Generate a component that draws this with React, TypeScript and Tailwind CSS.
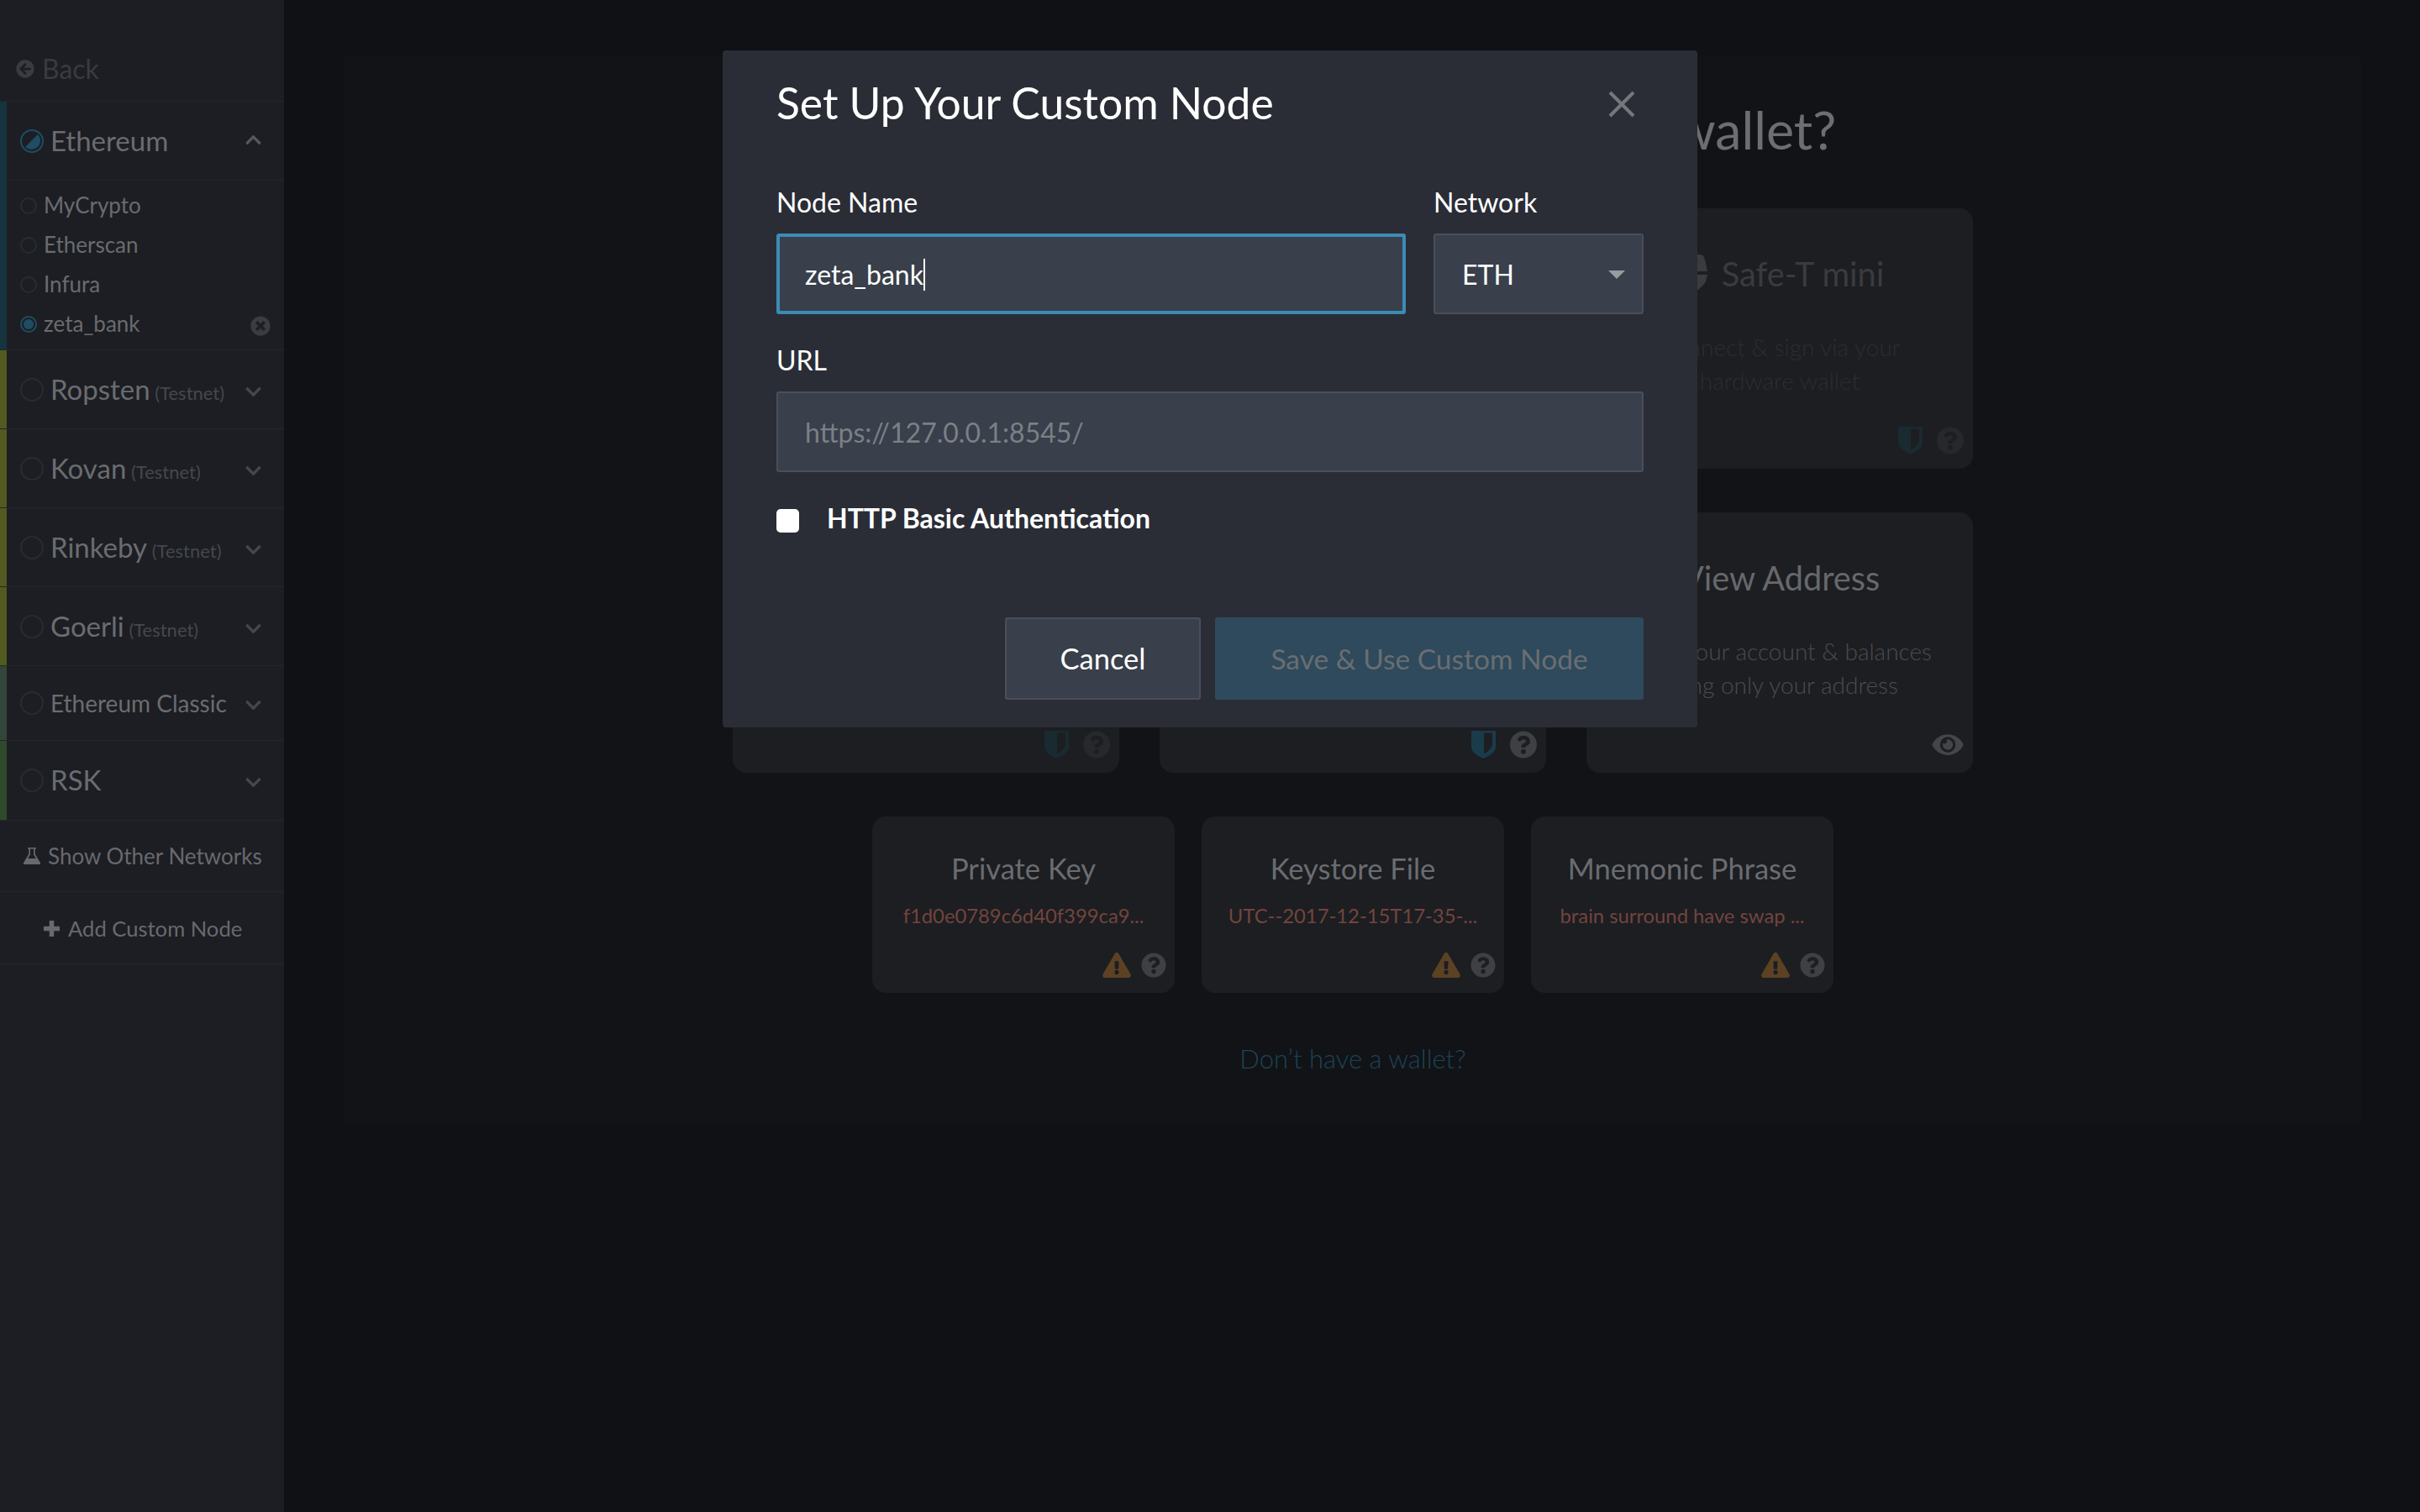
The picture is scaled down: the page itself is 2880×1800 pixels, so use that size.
import React from "react";
import { FaArrowCircleLeft, FaChevronUp, FaChevronDown, FaTimesCircle, FaQuestionCircle, FaExclamationTriangle, FaEye } from "react-icons/fa";

const Shield = ({ color }: { color: string }) => (
  <svg viewBox="0 0 29 33" className={`w-[29px] h-[33px] ${color}`}>
    <path fill="currentColor" d="M0 0h29v19c0 7-8 11-14.5 14C8 30 0 26 0 19z" />
    <path fill="#1c1e22" d="M15 2.5h10v14c0 3-5 8-10 11z" />
  </svg>
);

const Radio = ({ big }: { big?: boolean }) => (
  <span className={big ? "w-[28px] h-[28px] rounded-full border-2 border-[#282b30] shrink-0" : "w-[20px] h-[20px] rounded-full border-2 border-[#282b30] shrink-0"} />
);

const Net = ({ strip, name, sub, h = "h-[94px]", small }: { strip: string; name: string; sub?: boolean; h?: string; small?: boolean }) => (
  <div className={`${h} flex border-b border-[#24262b]`}>
    <div className={`w-[8px] ${strip}`} />
    <div className="flex-1 flex items-center pl-[16px] pr-[26px]">
      <Radio big />
      <div className="flex-1 ml-[8px] whitespace-nowrap">
        <span className={small ? "text-[28px] text-[#6a6c70]" : "text-[33px] text-[#6a6c70]"}>{name}</span>
        {sub && <span className="text-[22px] text-[#45474c]"> (Testnet)</span>}
      </div>
      <FaChevronDown className="w-[21px] h-[21px] text-[#45474b] mt-[5px]" />
    </div>
  </div>
);

const Item = ({ name, on }: { name: string; on?: boolean }) => (
  <div className="h-[47px] flex items-center pl-[16px] pr-[16px]">
    {on ? (
      <span className="w-[20px] h-[20px] rounded-full border-2 border-[#1f4d63] flex items-center justify-center shrink-0">
        <span className="w-[12px] h-[12px] rounded-full bg-[#1f4d63]" />
      </span>
    ) : (
      <Radio />
    )}
    <span className="flex-1 ml-[8px] text-[26px] text-[#696b6f]">{name}</span>
    {on && <FaTimesCircle className="w-[24px] h-[24px] text-[#3a3c40] mt-[4px]" />}
  </div>
);

const Sidebar = () => (
  <aside className="w-[338px] shrink-0 bg-[#1c1e23]">
    <div className="h-[121px] flex items-center pl-[19px] pt-[44px] border-b border-[#24262b] text-[#393b40]">
      <FaArrowCircleLeft className="w-[22px] h-[22px]" />
      <span className="ml-[9px] text-[32px]">Back</span>
    </div>
    <div className="flex border-b border-[#24262b]">
      <div className="w-[8px] bg-[#15343f]" />
      <div className="flex-1">
        <div className="h-[94px] flex items-center pl-[16px] pr-[26px] border-b border-[#24262b]">
          <svg viewBox="0 0 28 28" className="w-[28px] h-[28px] shrink-0">
            <circle cx="14" cy="14" r="13" fill="none" stroke="#1f4d63" strokeWidth="2" />
            <path fill="#1f4d63" d="M6 21 L21 6 A10.6 10.6 0 0 1 6 21z" />
          </svg>
          <span className="flex-1 ml-[8px] text-[33px] text-[#6a6c70]">Ethereum</span>
          <FaChevronUp className="w-[21px] h-[21px] text-[#55575b] -mt-[3px]" />
        </div>
        <div className="h-[201px] pt-[6px]">
          <Item name="MyCrypto" />
          <Item name="Etherscan" />
          <Item name="Infura" />
          <Item name="zeta_bank" on />
        </div>
      </div>
    </div>
    <Net strip="bg-[#525a1f]" name="Ropsten" sub />
    <Net strip="bg-[#525a1f]" name="Kovan" sub />
    <Net strip="bg-[#525a1f]" name="Rinkeby" sub />
    <Net strip="bg-[#525a1f]" name="Goerli" sub />
    <Net strip="bg-[#34463a]" name="Ethereum Classic" small h="h-[89px]" />
    <Net strip="bg-[#2f4a2b]" name="RSK" h="h-[95px]" />
    <div className="h-[85px] flex items-center pl-[28px] border-b border-[#24262b] text-[#68696d]">
      <svg viewBox="0 0 20 20" className="w-[20px] h-[20px] shrink-0">
        <path fill="currentColor" fillRule="evenodd" d="M5 0h10v1.6h-1.3v6.2L20 18v2H0v-2L6.3 7.8V1.6H5zM8 1.6v6.7L5.2 13h9.6L12 8.3V1.6z" />
        <path fill="currentColor" d="M5.2 13h9.6l2.4 5.2H2.8z" />
      </svg>
      <span className="ml-[9px] text-[26px]">Show Other Networks</span>
    </div>
    <div className="h-[86px] flex items-center pl-[52px] pt-[2px] border-b border-[#24262b] text-[#68696d]">
      <svg viewBox="0 0 19 19" className="w-[19px] h-[19px] shrink-0">
        <path d="M9.5 1v17M1 9.500h17" stroke="currentColor" strokeWidth="5.5" strokeLinecap="round" fill="none" />
      </svg>
      <span className="ml-[10px] text-[25.6px]">Add Custom Node</span>
    </div>
  </aside>
);

const Help = ({ color, big }: { color: string; big?: boolean }) => (
  <FaQuestionCircle className={`${big ? "w-[34px] h-[33px]" : "w-[30px] h-[30px]"} ${color}`} />
);

const BigCard = ({ title, d1, d2, titleCls = "text-[#66686c]", descCls = "text-[#4a4c50]", children, logo }: { title?: string; d1?: string; d2?: string; titleCls?: string; descCls?: string; children: React.ReactNode; logo?: React.ReactNode }) => (
  <div className="w-[460px] h-[310px] rounded-[16px] bg-[#1c1e22] flex flex-col items-center pt-[52px] pb-[17px] pr-[10px]">
    {title && <div className={`h-[52px] ml-[12px] flex items-center text-[39.7px] whitespace-nowrap ${titleCls}`}>{logo}{title}</div>}
    {d1 && (
      <div className={`mt-[41px] text-center text-[28px] font-light leading-[40px] ml-[10px] ${descCls}`}>
        <div>{d1}</div>
        <div>{d2}</div>
      </div>
    )}
    <div className="mt-auto self-end flex items-center gap-[16px]">{children}</div>
  </div>
);

const SmallCard = ({ title, sub }: { title: string; sub: string }) => (
  <div className="w-[360px] h-[210px] rounded-[16px] bg-[#1c1e22] flex flex-col items-center pt-[41px] pb-[18px] pr-[10px]">
    <div className="text-[34.500px] leading-[42px] text-[#6a6c70] ml-[10px]">{title}</div>
    <div className="mt-[20px] text-[23.8px] leading-[30px] text-[#74443c] ml-[10px] whitespace-nowrap">{sub}</div>
    <div className="mt-auto self-end flex items-center gap-[12px]">
      <FaExclamationTriangle className="w-[34px] h-[30px] text-[#5c4123]" />
      <Help color="text-[#3e4044]" />
    </div>
  </div>
);

const dim = <><Shield color="text-[#192a31]" /><Help big color="text-[#26282c]" /></>;

const Main = () => (
  <main className="flex-1 px-[72px] pt-[68px] bg-[#0f1115]">
    <div className="w-[2400px] h-[1272px] bg-[#111317] flex flex-col items-center">
      <h1 className="mt-[47px] h-[78px] flex items-center text-[62.6px] font-normal text-[#6d6e71] whitespace-nowrap">How would you like to access your wallet?</h1>
      <div className="mt-[55px] w-[1476px] flex justify-between">
        <BigCard>{dim}</BigCard>
        <BigCard>{dim}</BigCard>
        <BigCard
          title="Safe-T mini"
          titleCls="text-[#393b3f]"
          descCls="text-[#2b2d31]"
          d1="Connect & sign via your"
          d2="hardware wallet"
          logo={
            <svg viewBox="0 0 36 46" className="w-[36px] h-[46px] mr-[17px]">
              <path fill="#393b3f" d="M3 0h24c3 0 5 2 6 6l3 14H0L0 6c0-4 1-6 3-6z" />
              <path fill="#393b3f" d="M0 24h36l-2 8c-2 5-8 9-15 14H15C8 42 2 36 0 30z" />
            </svg>
          }
        >
          {dim}
        </BigCard>
      </div>
      <div className="mt-[52px] w-[1476px] flex justify-between">
        <BigCard>{dim}</BigCard>
        <BigCard>
          <Shield color="text-[#1a3c4a]" />
          <Help big color="text-[#3e4044]" />
        </BigCard>
        <BigCard title="View Address" d1="View your account & balances" d2="using only your address">
          <FaEye className="w-[40px] h-[33px] text-[#434549]" />
        </BigCard>
      </div>
      <div className="mt-[52px] flex gap-[32px]">
        <SmallCard title="Private Key" sub="f1d0e0789c6d40f399ca9..." />
        <SmallCard title="Keystore File" sub="UTC--2017-12-15T17-35-..." />
        <SmallCard title="Mnemonic Phrase" sub="brain surround have swap ..." />
      </div>
      <div className="mt-[58px] text-[31px] leading-[40px] font-light text-[#1d4454]">Don’t have a wallet?</div>
    </div>
  </main>
);

const Label = ({ children, className = "" }: { children: React.ReactNode; className?: string }) => (
  <div className={`h-[38px] leading-[38px] text-[32px] text-white ${className}`}>{children}</div>
);

const Modal = () => (
  <div className="absolute left-[860px] top-[60px] w-[1160px] h-[806px] rounded-[4px] bg-[#2a2d36] px-[64px] pt-[29px] flex flex-col">
    <div className="flex items-center justify-between h-[68px]">
      <h2 className="text-[51.6px] font-normal text-white">Set Up Your Custom Node</h2>
      <svg viewBox="0 0 32 32" className="w-[32px] h-[32px] mr-[10px] mt-[1px] text-[#75777c]">
        <path d="M2 2 30 30M30 2 2 30" stroke="currentColor" strokeWidth="4" fill="none" />
      </svg>
    </div>
    <div className="mt-[65px] flex gap-[33px]">
      <div className="w-[749px]">
        <Label>Node Name</Label>
        <div className="mt-[18px] h-[96px] bg-[#393f4b] border-[4px] border-[#3a8cb4] rounded-[3px] flex items-center pl-[30px] pt-[2px] text-[32px] text-white">
          zeta_bank<span className="inline-block w-[2px] h-[38px] bg-white" />
        </div>
      </div>
      <div className="w-[250px]">
        <Label>Network</Label>
        <div className="mt-[18px] h-[96px] bg-[#393f4b] border-2 border-[#4a4f5c] rounded-[3px] flex items-center justify-between pl-[32px] pr-[20px] pt-[2px] text-[32px] text-white">
          ETH
          <span className="w-0 h-0 border-l-[10px] border-r-[10px] border-t-[10px] border-l-transparent border-r-transparent border-t-[#9a9ca0]" />
        </div>
      </div>
    </div>
    <Label className="mt-[36px]">URL</Label>
    <div className="mt-[18px] h-[96px] bg-[#393f4b] border-2 border-[#4a4f5c] rounded-[3px] flex items-center pl-[32px] pt-[2px] text-[32px] text-[#7c7f86]">
      https://127.0.0.1:8545/
    </div>
    <div className="mt-[36px] flex items-center">
      <span className="w-[27px] h-[28px] rounded-[5px] bg-white" />
      <span className="ml-[33px] text-[32px] font-bold text-white -mt-[5px]">HTTP Basic Authentication</span>
    </div>
    <div className="mt-[94px] flex justify-end gap-[17px]">
      <div className="w-[233px] h-[98px] bg-[#393f4b] border-2 border-[#4a4f5c] rounded-[3px] flex items-center justify-center text-[34.500px] text-white">Cancel</div>
      <div className="w-[510px] h-[98px] bg-[#2e4a5c] rounded-[3px] flex items-center justify-center text-[33.500px] text-[#6a6d72]">Save &amp; Use Custom Node</div>
    </div>
  </div>
);

export default function App() {
  return (
    <div className="relative w-[2880px] h-[1800px] overflow-hidden flex font-['Lato','Liberation_Sans',sans-serif] bg-[#0f1115]">
      <Sidebar />
      <Main />
      <Modal />
    </div>
  );
}
